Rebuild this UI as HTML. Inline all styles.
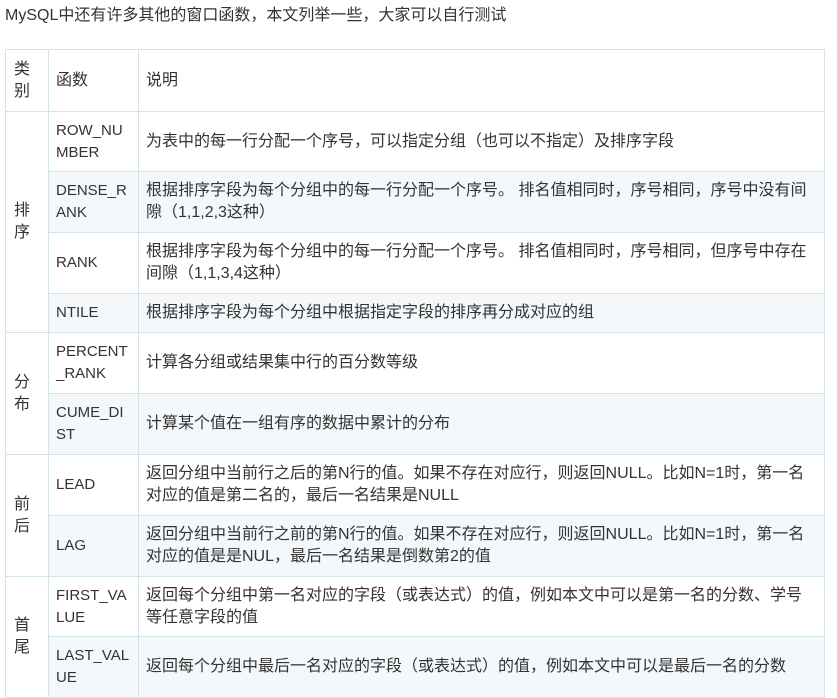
<!DOCTYPE html>
<html><head><meta charset="utf-8"><style>
html,body{margin:0;padding:0;background:#fff;width:837px;height:652px;overflow:hidden}
body{font-family:"Liberation Sans","Noto Sans CJK SC",sans-serif;color:#333;font-size:16px}
p{position:absolute;left:5px;top:5px;margin:0;line-height:22px}
table{position:absolute;left:5px;top:49px;border-collapse:collapse;width:820px;table-layout:fixed}
td{border:1px solid #d3e4e8;padding:0 7px;line-height:22px;vertical-align:middle;word-break:break-all}
td.f{font-size:15px;padding:0 6px 0 7px}
tr.l td.f,tr.l td.d{background:#f4f8fb}
td.c{padding:0 8px;background:#fff}
</style></head><body>
<p>MySQL中还有许多其他的窗口函数，本文列举一些，大家可以自行测试</p>
<table>
<colgroup><col style="width:43px"><col style="width:90px"><col></colgroup>
<tr style="height:62px"><td class="c">类别</td><td>函数</td><td>说明</td></tr>
<tr style="height:60px"><td class="c" rowspan="4">排序</td><td class="f">ROW_NUMBER</td><td class="d">为表中的每一行分配一个序号，可以指定分组（也可以不指定）及排序字段</td></tr>
<tr class="l" style="height:61px"><td class="f">DENSE_RANK</td><td class="d">根据排序字段为每个分组中的每一行分配一个序号。 排名值相同时，序号相同，序号中没有间隙（1,1,2,3这种）</td></tr>
<tr style="height:61px"><td class="f">RANK</td><td class="d">根据排序字段为每个分组中的每一行分配一个序号。 排名值相同时，序号相同，但序号中存在间隙（1,1,3,4这种）</td></tr>
<tr class="l" style="height:39px"><td class="f">NTILE</td><td class="d">根据排序字段为每个分组中根据指定字段的排序再分成对应的组</td></tr>
<tr style="height:61px"><td class="c" rowspan="2">分布</td><td class="f">PERCENT_RANK</td><td class="d">计算各分组或结果集中行的百分数等级</td></tr>
<tr class="l" style="height:61px"><td class="f">CUME_DIST</td><td class="d">计算某个值在一组有序的数据中累计的分布</td></tr>
<tr style="height:61px"><td class="c" rowspan="2">前后</td><td class="f">LEAD</td><td class="d">返回分组中当前行之后的第N行的值。如果不存在对应行，则返回NULL。比如N=1时，第一名对应的值是第二名的，最后一名结果是NULL</td></tr>
<tr class="l" style="height:61px"><td class="f">LAG</td><td class="d">返回分组中当前行之前的第N行的值。如果不存在对应行，则返回NULL。比如N=1时，第一名对应的值是是NUL，最后一名结果是倒数第2的值</td></tr>
<tr style="height:60px"><td class="c" rowspan="2">首尾</td><td class="f">FIRST_VALUE</td><td class="d">返回每个分组中第一名对应的字段（或表达式）的值，例如本文中可以是第一名的分数、学号等任意字段的值</td></tr>
<tr class="l" style="height:61px"><td class="f">LAST_VALUE</td><td class="d">返回每个分组中最后一名对应的字段（或表达式）的值，例如本文中可以是最后一名的分数</td></tr>
</table>
</body></html>
